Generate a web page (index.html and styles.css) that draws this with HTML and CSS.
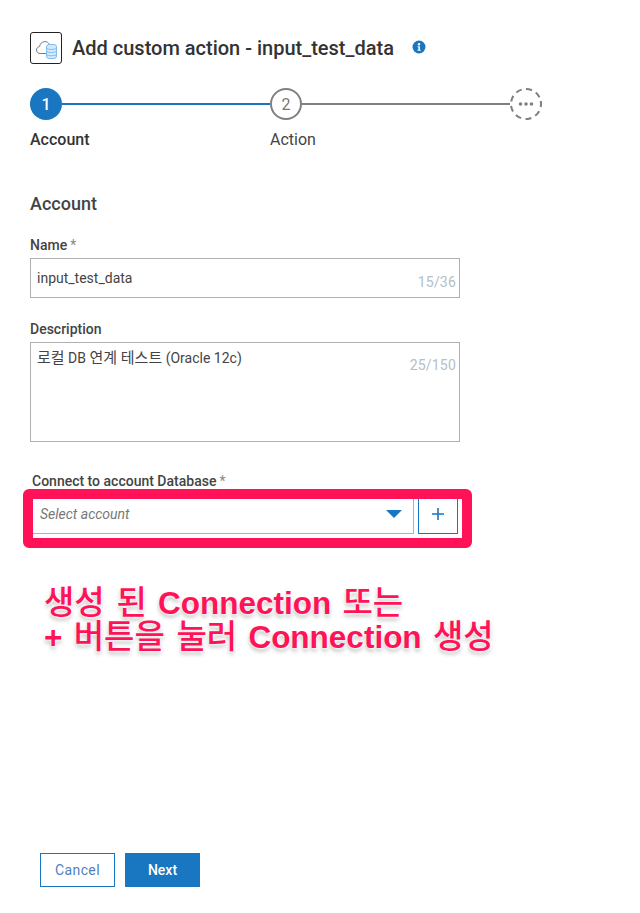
FILE: index.html
```html
<!DOCTYPE html>
<html lang="en">
<head>
<meta charset="utf-8">
<title>Add custom action</title>
<link rel="stylesheet" href="styles.css">
</head>
<body>
<main class="page">
  <header class="title-row">
    <span class="app-icon">
      <svg width="24" height="24" viewBox="0 0 24 24" fill="none">
        <path d="M12 17.500H6.200C3.800 17.500 2.500 15.800 2.500 14c0-1.900 1.400-3.300 3.100-3.400C6 7.600 8.200 5.600 10.800 5.600c2 0 3.700 1 4.600 2.800" stroke="#777" stroke-width="1"/>
        <rect x="12.500" y="8.500" width="10" height="14" rx="2.500" fill="#d3eafc" stroke="#7dbdf2" stroke-width="1"/>
        <path d="M12.500 12.500c2 1.300 8 1.300 10 0M12.500 15.500c2 1.300 8 1.300 10 0M12.500 18.800c2 1.300 8 1.300 10 0" stroke="#7dbdf2" stroke-width="1"/>
      </svg>
    </span>
    <h1 class="title">Add custom action - input_test_data</h1>
    <svg class="info" width="14" height="14" viewBox="0 0 14 14">
      <circle cx="7" cy="7" r="6.500" fill="#1976c0"/>
      <circle cx="7" cy="4.200" r="1.200" fill="#fff"/>
      <path d="M5.600 6.200h2.300v3.600h.8v1H5.500v-1h.9V7.200h-.8z" fill="#fff"/>
    </svg>
  </header>

  <section class="stepper">
    <div class="step step-active">
      <div class="step-track">
        <span class="dot dot-active">1</span>
        <span class="line line-blue"></span>
      </div>
      <span class="step-label step-label-active">Account</span>
    </div>
    <div class="step">
      <div class="step-track">
        <span class="dot dot-todo">2</span>
        <span class="line line-grey"></span>
      </div>
      <span class="step-label">Action</span>
    </div>
    <div class="step-end">
      <svg width="32" height="32" viewBox="0 0 32 32" fill="none">
        <circle cx="16" cy="16" r="15" stroke="#808080" stroke-width="2" stroke-dasharray="6 4.470" transform="rotate(-11.500 16 16)"/>
        <circle cx="10.500" cy="16" r="1.800" fill="#808080"/>
        <circle cx="16" cy="16" r="1.800" fill="#808080"/>
        <circle cx="21.500" cy="16" r="1.800" fill="#808080"/>
      </svg>
    </div>
  </section>

  <h2 class="section-title">Account</h2>

  <div class="field field-name">
    <label class="label">Name<span class="req">*</span></label>
    <div class="box box-name">
      <span class="value">input_test_data</span>
      <span class="count count-name">15/36</span>
    </div>
  </div>

  <div class="field field-desc">
    <label class="label">Description</label>
    <div class="box box-desc">
      <span class="value"><span class="ko">로컬</span> DB <span class="ko">연계 테스트</span> (Oracle 12c)</span>
      <span class="count count-desc">25/150</span>
    </div>
  </div>

  <div class="field field-connect">
    <label class="label label-connect">Connect to account Database<span class="req">*</span></label>
    <div class="connect-row">
      <div class="select">
        <span class="placeholder">Select account</span>
        <span class="caret"></span>
      </div>
      <button class="add" type="button">
        <svg width="14" height="14" viewBox="0 0 14 14"><path d="M7 1v12M1 7h12" stroke="#1976c0" stroke-width="1.600"/></svg>
      </button>
    </div>
    <span class="highlight"></span>
  </div>

  <p class="note"><span class="note-ko">생성 된</span> Connection <span class="note-ko">또는</span><br>+ <span class="note-ko">버튼을 눌러</span> Connection <span class="note-ko">생성</span></p>

  <footer class="actions">
    <button class="btn btn-outline" type="button">Cancel</button>
    <button class="btn btn-solid" type="button">Next</button>
  </footer>
</main>
</body>
</html>
```

FILE: styles.css
```css
* { box-sizing: border-box; }
html, body { margin: 0; padding: 0; background: #fff; }
body {
  width: 640px;
  height: 913px;
  overflow: hidden;
  font-family: Roboto, "Noto Sans CJK KR", sans-serif;
  color: #333;
}
.page { padding: 32px 0 0 30px; }

.title-row { display: flex; align-items: center; height: 32px; }
.app-icon {
  width: 32px; height: 32px;
  border: 1px solid #222; border-radius: 3px;
  display: flex; align-items: center; justify-content: center;
}
.title { margin: 0 0 0 10px; font-size: 20px; font-weight: 500; line-height: 32px; color: #333; }
.info { margin-left: 18px; margin-top: -2px; }

.stepper { display: flex; margin-top: 24px; width: 512px; }
.step { width: 240px; display: flex; flex-direction: column; }
.step-track { display: flex; align-items: center; height: 32px; }
.dot {
  flex: none; width: 32px; height: 32px; border-radius: 50%;
  display: flex; align-items: center; justify-content: center;
  font-size: 16px;
}
.dot-active { background: #1976c0; color: #fff; font-weight: 500; }
.dot-todo { border: 2px solid #808080; color: #777; }
.line { flex: 1; height: 2px; }
.line-blue { background: #1976c0; }
.line-grey { background: #808080; }
.step-label { margin-top: 10px; font-size: 16px; line-height: 20px; color: #444; }
.step-label-active { color: #333; font-weight: 500; }
.step-end { width: 32px; height: 32px; }

.section-title { margin: 43px 0 0; font-size: 18px; font-weight: 500; line-height: 22px; color: #444; }

.field { width: 430px; }
.label { display: block; font-size: 14px; font-weight: 500; line-height: 18px; color: #444; }
.req { margin-left: 3px; color: #888; font-weight: 400; }
.box { position: relative; border: 1px solid #b0b0b0; padding: 0 6px; }
.value { display: block; font-size: 14px; line-height: 18px; color: #444; }
.ko { font-size: 15px; }
.count { position: absolute; right: 3px; font-size: 14px; line-height: 18px; letter-spacing: .2px; color: #b3c0c8; }

.field-name { margin-top: 21px; }
.box-name { margin-top: 4px; height: 40px; padding-top: 10px; }
.count-name { top: 14px; }

.field-desc { margin-top: 22px; }
.box-desc { margin-top: 4px; height: 100px; padding-top: 6px; }
.count-desc { top: 13px; }

.field-connect { position: relative; margin-top: 30px; }
.label-connect { margin-left: 2px; }
.connect-row { display: flex; margin-top: 9px; height: 44px; padding-left: 3px; }
.select {
  width: 381px; height: 38px; margin-top: -3px;
  border: 1px solid #b0b0b0; border-width: 0 1px 1px 0;
  display: flex; align-items: center; justify-content: space-between;
  padding: 0 11px 2px 7px;
}
.placeholder { font-size: 14px; font-style: italic; color: #777; }
.caret {
  width: 0; height: 0;
  border-left: 8px solid transparent; border-right: 8px solid transparent;
  border-top: 8px solid #1976c0;
}
.add {
  width: 40px; height: 39px; margin: -4px 0 0 4px; padding: 0;
  background: #fff; border: 1px solid #1976c0; border-top: 0;
  display: flex; align-items: center; justify-content: center;
}
.highlight {
  position: absolute; left: -7px; top: 17px;
  width: 449px; height: 59px;
  border: 10px solid #ff1257; border-radius: 6px;
}

.note {
  margin: 43px 0 0 14px;
  font-family: "Liberation Sans", "Noto Sans CJK KR", sans-serif;
  font-size: 31.500px; font-weight: 700; line-height: 34px;
  color: #ff1257;
  white-space: nowrap;
  word-spacing: 2.500px;
  text-shadow: 0 0 2px #fff, 1px 1px 3px #fff, 0 3px 4px rgba(0,0,0,.3);
}
.note-ko { font-size: 33px; font-weight: 500; }

.actions { display: flex; gap: 10px; margin: 199px 0 0 10px; }
.btn { width: 75px; height: 34px; padding: 0; font-family: Roboto, sans-serif; font-size: 14px; }
.btn-outline { background: #fff; border: 1px solid #1976c0; color: #4f7fc0; letter-spacing: .4px; }
.btn-solid { background: #1976c0; border: 0; color: #fff; font-weight: 500; }
```
